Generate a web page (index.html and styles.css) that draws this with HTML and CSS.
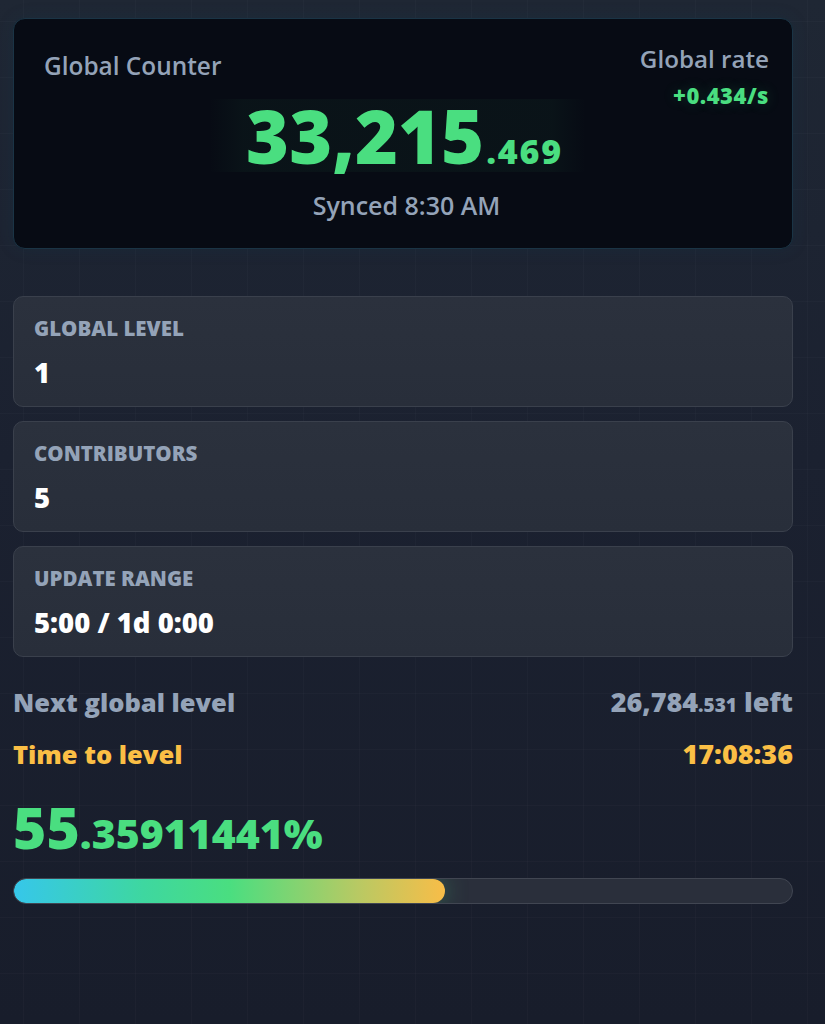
FILE: index.html
```html
<!DOCTYPE html>
<html lang="en">
<head>
<meta charset="utf-8">
<title>Global Counter</title>
<link rel="stylesheet" href="styles.css">
</head>
<body>
<main class="page">
  <section class="hero">
    <div class="hero-top">
      <div class="hero-title">Global Counter</div>
      <div class="rate">
        <div class="rate-label">Global rate</div>
        <div class="rate-value">+0.434/s</div>
      </div>
    </div>
    <div class="counter-wrap">
      <div class="counter"><span class="counter-int">33,215</span><span class="counter-frac">.469</span></div>
    </div>
    <div class="synced">Synced 8:30 AM</div>
  </section>

  <section class="stats">
    <div class="stat">
      <div class="stat-label">GLOBAL LEVEL</div>
      <div class="stat-value">1</div>
    </div>
    <div class="stat">
      <div class="stat-label">CONTRIBUTORS</div>
      <div class="stat-value">5</div>
    </div>
    <div class="stat">
      <div class="stat-label">UPDATE RANGE</div>
      <div class="stat-value">5:00 / 1d 0:00</div>
    </div>
  </section>

  <section class="progress">
    <div class="row row-next">
      <span class="row-label">Next global level</span>
      <span class="row-value">26,784<span class="small">.531</span> left</span>
    </div>
    <div class="row row-time">
      <span class="row-label">Time to level</span>
      <span class="row-value">17:08:36</span>
    </div>
    <div class="percent"><span class="pct-int">55</span><span class="pct-frac">.35911441%</span></div>
    <div class="bar">
      <div class="bar-fill" style="width: 55.36%"></div>
    </div>
  </section>
</main>
</body>
</html>
```

FILE: styles.css
```css
html, body {
  margin: 0;
  padding: 0;
}

body {
  min-height: 1024px;
  font-family: "Open Sans", "Noto Sans", sans-serif;
  color: #f1f5f9;
  background-color: #1b202d;
  background-image:
    linear-gradient(rgba(255,255,255,0.018) 1px, transparent 1px),
    linear-gradient(90deg, rgba(255,255,255,0.018) 1px, transparent 1px),
    linear-gradient(180deg, #1f2734 0%, #1b2130 45%, #181d2b 100%);
  background-size: 56px 56px, 56px 56px, 100% 100%;
  background-position: 23px 21px, 23px 21px, 0 0;
}

.page {
  width: 780px;
  margin-left: 13px;
  padding-top: 18px;
}

/* Hero card */
.hero {
  background: #070b14;
  border: 1px solid #1a3445;
  border-radius: 12px;
  padding: 25px 23px 0 30px;
  height: 231px;
  box-sizing: border-box;
  box-shadow: 0 0 18px rgba(20, 80, 110, 0.12);
}

.hero-top {
  display: flex;
  justify-content: space-between;
  align-items: flex-start;
}

.hero-title {
  font-size: 24.4px;
  font-weight: 600;
  color: #94a3b8;
  line-height: 30px;
  margin-top: 7px;
}

.rate {
  text-align: right;
}

.rate-label {
  font-size: 24.2px;
  font-weight: 600;
  color: #94a3b8;
  line-height: 30px;
}

.rate-value {
  display: inline-block;
  margin-top: 8px;
  font-size: 22px;
  font-weight: 800;
  color: #4ade80;
  line-height: 26px;
  letter-spacing: 0.5px;
  text-shadow: 0 0 14px rgba(74, 222, 128, 0.18);
}

.counter-wrap {
  display: flex;
  justify-content: center;
  margin-top: -10.5px;
  padding-right: 18px;
}

.counter {
  color: #4ade80;
  font-weight: 800;
  font-size: 73.5px;
  line-height: 73px;
  height: 73px;
  padding: 0 23px 0 37px;
  background: linear-gradient(90deg, rgba(74,222,128,0) 0%, rgba(74,222,128,0.04) 9%, rgba(74,222,128,0.04) 91%, rgba(74,222,128,0) 100%);
}

.counter-frac {
  font-size: 34px;
  line-height: 1;
  letter-spacing: 1.8px;
  margin-left: 2px;
}

.synced {
  text-align: center;
  margin-top: 18px;
  font-size: 25px;
  font-weight: 600;
  color: #94a3b8;
  line-height: 30px;
}

/* Stats */
.stats {
  margin-top: 47px;
  display: flex;
  flex-direction: column;
  gap: 14px;
}

.stat {
  height: 111px;
  box-sizing: border-box;
  background: linear-gradient(180deg, #2b313d 0%, #282e3a 100%);
  border: 1px solid #3a404c;
  border-radius: 10px;
  padding: 18px 20px 0 20px;
}

.stat-label {
  font-size: 20.5px;
  font-weight: 800;
  color: #94a3b8;
  line-height: 26px;
}

.stat-value {
  margin-top: 14.5px;
  font-size: 27.5px;
  font-weight: 800;
  color: #ffffff;
  line-height: 34px;
}

/* Progress */
.progress {
  margin-top: 28.5px;
}

.row {
  display: flex;
  justify-content: space-between;
  align-items: baseline;
  font-weight: 800;
  line-height: 32px;
}

.row-label {
  font-size: 25.5px;
}

.row-value {
  font-size: 27px;
}

.row-next {
  color: #94a3b8;
}

.row-next .small {
  font-size: 19px;
}

.row-time {
  margin-top: 17px;
  color: #fbbf45;
}

.percent {
  margin-top: 27px;
  color: #4ade80;
  font-weight: 800;
  font-size: 57px;
  line-height: 60px;
}

.pct-frac {
  font-size: 41px;
  line-height: 1;
}

.bar {
  margin-top: 21.5px;
  height: 26px;
  box-sizing: border-box;
  background: #2a2f3b;
  border: 1px solid #414652;
  border-radius: 13px;
  overflow: hidden;
}

.bar-fill {
  height: 100%;
  border-radius: 12px;
  background: linear-gradient(90deg, #36c7ea 0%, #3ed7a0 30%, #4ade80 50%, #b9c963 80%, #f8bd48 100%);
  box-shadow: 0 0 24px rgba(74, 222, 128, 0.35);
}
```
